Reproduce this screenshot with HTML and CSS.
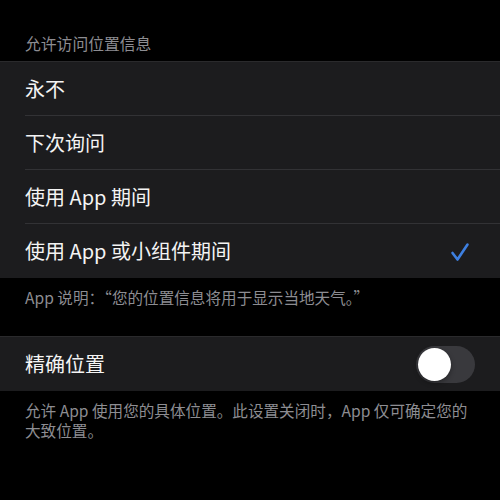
FILE: index.html
```html
<!DOCTYPE html>
<html lang="zh-CN">
<head>
<meta charset="utf-8">
<link rel="stylesheet" href="styles.css">
</head>
<body>
  <div class="section-header">允许访问位置信息</div>
  <div class="group">
    <div class="row"><span class="label">永不</span></div>
    <div class="row"><span class="label">下次询问</span></div>
    <div class="row"><span class="label">使用 App 期间</span></div>
    <div class="row">
      <span class="label">使用 App 或小组件期间</span>
      <svg class="check" width="20" height="21" viewBox="0 0 20 21">
        <path d="M2.5 11 L7.5 17.5 L17.5 2.5" fill="none" stroke="#3d7fe0" stroke-width="2.6" stroke-linecap="round" stroke-linejoin="round"/>
      </svg>
    </div>
  </div>
  <div class="section-footer">App 说明：“您的位置信息将用于显示当地天气。”</div>

  <div class="group group-second">
    <div class="row">
      <span class="label">精确位置</span>
      <div class="switch"><div class="knob"></div></div>
    </div>
  </div>
  <div class="section-footer">允许 App 使用您的具体位置。此设置关闭时，App 仅可确定您的大致位置。</div>
</body>
</html>
```
FILE: styles.css
```css
html, body {
  margin: 0;
  padding: 0;
  background: #000;
}

body {
  width: 500px;
  font-family: "Noto Sans CJK SC", "Noto Sans", sans-serif;
  color: #f4f4f4;
}

.section-header {
  padding: 34px 25px 0;
  height: 20px;
  line-height: 20px;
  margin-bottom: 7px;
  font-size: 15.8px;
  color: #8d8d92;
}

.group {
  background: #1c1c1e;
  border-top: 1px solid #2a2a2c;
}

.group-second {
  margin-top: 29px;
}

.row {
  height: 54px;
  margin-left: 25px;
  padding-right: 25px;
  display: flex;
  align-items: center;
  justify-content: space-between;
  border-bottom: 1px solid #323235;
  box-sizing: border-box;
}

.group .row:last-child {
  border-bottom: none;
}

.label {
  font-size: 20px;
  line-height: 24px;
}

.check {
  margin-right: 5px;
  margin-top: 2px;
}

.section-footer {
  padding: 0 25px;
  margin-top: 9px;
  font-size: 15.6px;
  line-height: 20px;
  color: #8d8d92;
}

.switch {
  width: 59px;
  height: 37px;
  border-radius: 19px;
  background: #39393d;
  display: flex;
  align-items: center;
  padding-left: 2px;
  box-sizing: border-box;
}

.knob {
  width: 33px;
  height: 33px;
  border-radius: 50%;
  background: #fff;
  box-shadow: 0 2px 5px rgba(0, 0, 0, 0.35);
}
```
